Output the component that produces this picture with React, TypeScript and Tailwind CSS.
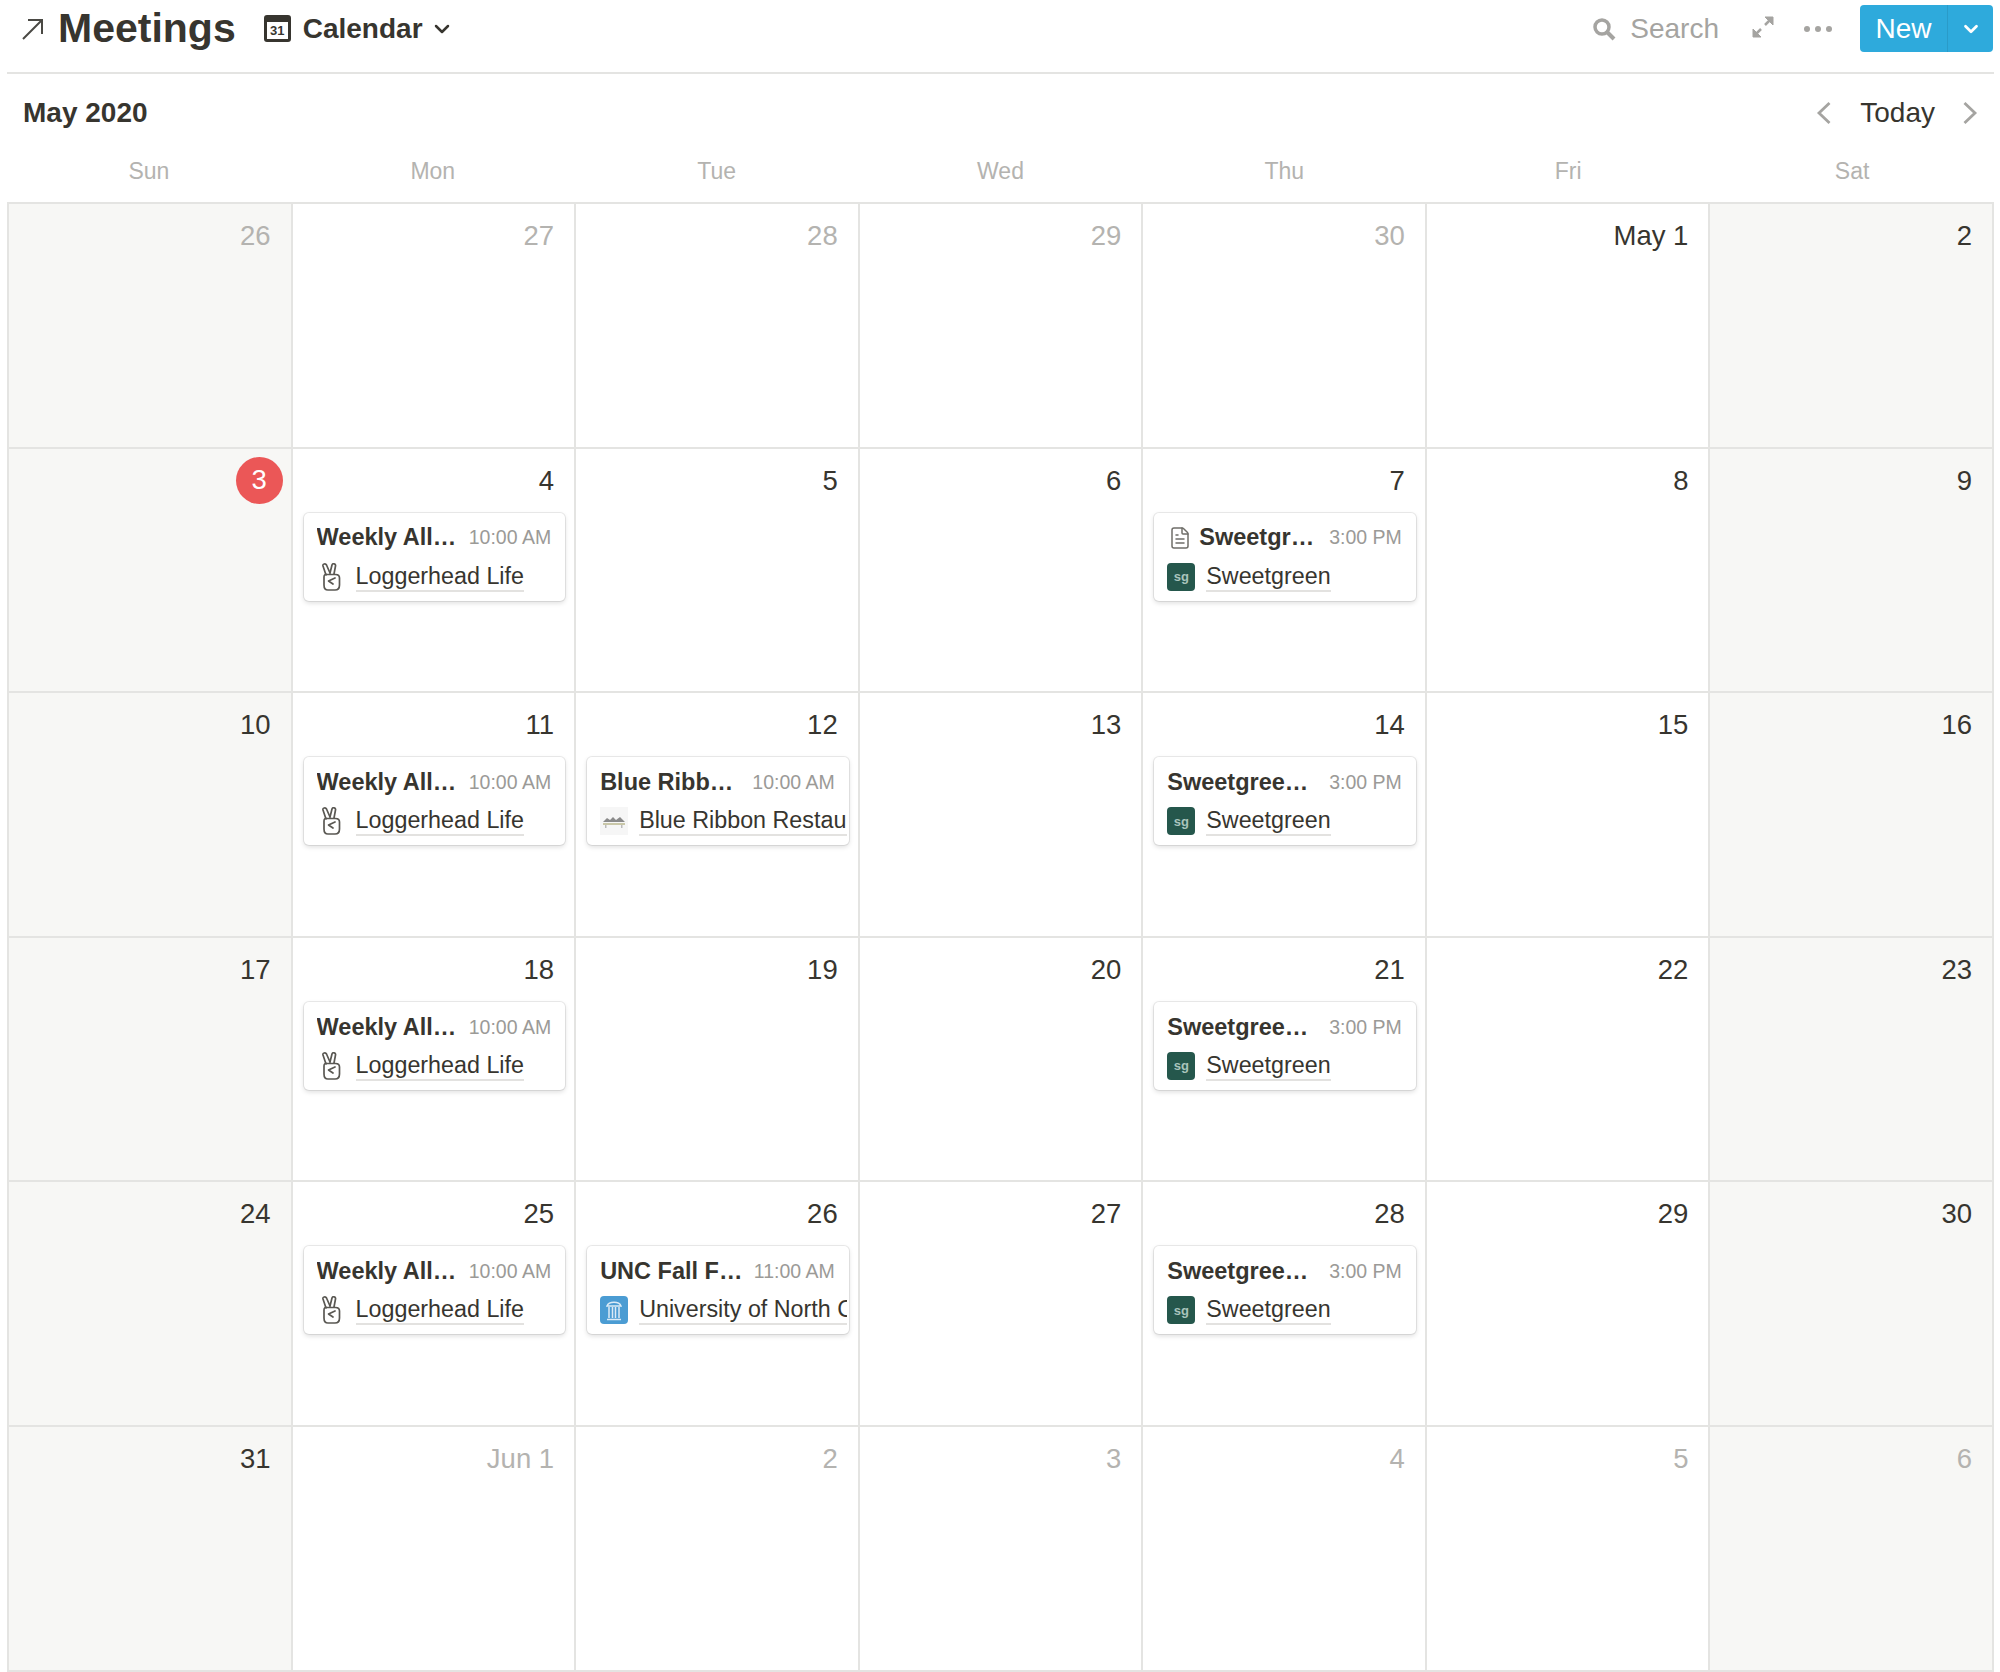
import React from 'react';
import { ChevronDown, FileText } from 'lucide-react';

type Source = 'peace' | 'sg' | 'ribbon' | 'unc';

type Meeting = {
  title: string;
  time: string;
  source: string;
  icon: Source;
  doc?: boolean;
};

type Day = {
  label: string;
  muted?: boolean;
  today?: boolean;
  meeting?: Meeting;
};

const allHands: Meeting = { title: 'Weekly All Hands', time: '10:00 AM', source: 'Loggerhead Life', icon: 'peace' };
const sweetgreen: Meeting = { title: 'Sweetgreen Meeting', time: '3:00 PM', source: 'Sweetgreen', icon: 'sg' };

const days: Day[] = [
  { label: '26', muted: true },
  { label: '27', muted: true },
  { label: '28', muted: true },
  { label: '29', muted: true },
  { label: '30', muted: true },
  { label: 'May 1' },
  { label: '2' },
  { label: '3', today: true },
  { label: '4', meeting: allHands },
  { label: '5' },
  { label: '6' },
  { label: '7', meeting: { ...sweetgreen, doc: true } },
  { label: '8' },
  { label: '9' },
  { label: '10' },
  { label: '11', meeting: allHands },
  {
    label: '12',
    meeting: { title: 'Blue Ribbon Meeting', time: '10:00 AM', source: 'Blue Ribbon Restaurants', icon: 'ribbon' },
  },
  { label: '13' },
  { label: '14', meeting: sweetgreen },
  { label: '15' },
  { label: '16' },
  { label: '17' },
  { label: '18', meeting: allHands },
  { label: '19' },
  { label: '20' },
  { label: '21', meeting: sweetgreen },
  { label: '22' },
  { label: '23' },
  { label: '24' },
  { label: '25', meeting: allHands },
  {
    label: '26',
    meeting: { title: 'UNC Fall Fair Meeting', time: '11:00 AM', source: 'University of North Carolina', icon: 'unc' },
  },
  { label: '27' },
  { label: '28', meeting: sweetgreen },
  { label: '29' },
  { label: '30' },
  { label: '31' },
  { label: 'Jun 1', muted: true },
  { label: '2', muted: true },
  { label: '3', muted: true },
  { label: '4', muted: true },
  { label: '5', muted: true },
  { label: '6', muted: true },
];

const weekdays = ['Sun', 'Mon', 'Tue', 'Wed', 'Thu', 'Fri', 'Sat'];

function SourceIcon({ icon }: { icon: Source }) {
  if (icon === 'peace') {
    return (
      <div className="flex h-[28px] w-[28px] shrink-0 items-center justify-center">
        <svg width="20" height="28" viewBox="0 0 20 28" fill="none" stroke="#5a5853" strokeWidth="1.7" strokeLinejoin="round" strokeLinecap="round">
          <path d="M5 12 L2 3 C1.5 1 4.5 0 5.5 2 L9 10" />
          <path d="M9 10 L11 2 C11.5 0 15 0.5 14.5 3 L13 11" />
          <path d="M3 14 C3 11.5 4.5 11 6 11.5 L14.5 11.5 C17.5 11.5 18.5 13 18.5 15 L18.5 22 C18.5 25.5 16.5 27 14 27 L7 27 C4.5 27 3 25.5 3 22 Z" />
          <path d="M14 15 L7.5 18 L12 21" />
        </svg>
      </div>
    );
  }
  if (icon === 'sg') {
    return (
      <div className="flex h-[28px] w-[28px] shrink-0 items-center justify-center rounded-[4px] bg-[#25574c] text-[13px] font-bold leading-none text-[#a9c4bc]">
        sg
      </div>
    );
  }
  if (icon === 'ribbon') {
    return (
      <div className="flex h-[28px] w-[28px] shrink-0 items-center justify-center bg-[#f6f6f6]">
        <svg width="24" height="14" viewBox="0 0 24 14">
          <path d="M1 8 L5 4 L8 6 L11 3 L14 6 L18 3 L23 8 Z" fill="#8a8a8a" />
          <rect x="1" y="9" width="22" height="2" fill="#c9c7a8" />
          <rect x="3" y="11" width="1.5" height="3" fill="#bbb" />
          <rect x="19" y="11" width="1.5" height="3" fill="#bbb" />
        </svg>
      </div>
    );
  }
  return (
    <div className="flex h-[28px] w-[28px] shrink-0 items-center justify-center rounded-[4px] bg-[#4b9cd3]">
      <svg width="18" height="22" viewBox="0 0 18 22" fill="none" stroke="#dcebf6" strokeWidth="1.5">
        <path d="M2 7 C4 2 14 2 16 7 Z" />
        <path d="M4 8 V19 M7.5 8 V19 M10.5 8 V19 M14 8 V19" />
        <path d="M2 20.5 H16" />
      </svg>
    </div>
  );
}

function MeetingCard({ meeting }: { meeting: Meeting }) {
  return (
    <div className="ml-[11px] mr-[9px] h-[88px] overflow-hidden rounded-[5px] bg-white pl-[13px] shadow-[0_0_0_1px_rgba(15,15,15,0.08),0_2px_5px_rgba(15,15,15,0.14)]">
      <div className="flex h-[49px] items-center pr-[14px] pt-[2px]">
        {meeting.doc && (
          <FileText className="ml-[1px] mr-[7px] h-[24px] w-[24px] shrink-0 text-[#6f6e69]" strokeWidth={1.5} />
        )}
        <span className="min-w-0 flex-1 truncate text-[23.5px] font-bold text-[#37352f]">{meeting.title}</span>
        <span className="ml-[10px] shrink-0 text-[19.5px] text-[#9b9a97]">{meeting.time}</span>
      </div>
      <div className="mr-[2px] flex items-center gap-[11px] overflow-hidden whitespace-nowrap">
        <SourceIcon icon={meeting.icon} />
        <span className="border-b-2 border-[#e3e2e0] text-[23.3px] leading-[28px] text-[#37352f]">{meeting.source}</span>
      </div>
    </div>
  );
}

function DayCell({ day, weekend }: { day: Day; weekend: boolean }) {
  return (
    <div className={`border-b-2 border-r-2 border-[#e4e4e2] ${weekend ? 'bg-[#f7f7f5]' : 'bg-white'}`}>
      {day.today ? (
        <div className="flex h-[55px] items-start justify-end pr-[8px] pt-[8px]">
          <div className="flex h-[47px] w-[47px] items-center justify-center rounded-full bg-[#eb5757] text-[27.5px] text-white">
            {day.label}
          </div>
        </div>
      ) : (
        <div
          className={`flex h-[55px] items-start justify-end pr-[20px] pt-[15px] text-[27.5px] leading-[34px] ${
            day.muted ? 'text-[#b4b3b0]' : 'text-[#37352f]'
          }`}
        >
          {day.label}
        </div>
      )}
      {day.meeting && (
        <div className="pt-[9px]">
          <MeetingCard meeting={day.meeting} />
        </div>
      )}
    </div>
  );
}

export default function App() {
  return (
    <div className="h-[1672px] w-[2000px] overflow-hidden bg-white font-['Liberation_Sans',sans-serif] text-[#37352f]">
      <div className="pl-[7px] pr-[6px]">
        {/* top bar */}
        <div className="flex h-[74px] items-start border-b-2 border-[#e4e4e2] pt-[5px]">
          <div className="flex h-[47px] items-center pl-[14px]">
            <svg width="24" height="24" viewBox="0 0 24 24" fill="none" stroke="#4a4944" strokeWidth="2">
              <path d="M2 22 L21 3 M7 3 H21 V17" />
            </svg>
            <span className="ml-[13px] text-[41px] font-bold">Meetings</span>
            <div className="relative ml-[28px] flex h-[27px] w-[27px] items-end justify-center rounded-[3px] border-[3px] border-t-[7px] border-[#37352f]">
              <span className="text-[13px] font-bold leading-[16px]">31</span>
            </div>
            <span className="ml-[12px] text-[28px] font-bold">Calendar</span>
            <ChevronDown className="ml-[7px] h-[24px] w-[24px]" strokeWidth={2.5} />
          </div>
          <div className="ml-auto mr-[1px] flex h-[47px] items-center text-[#a5a4a1]">
            <svg width="24" height="24" viewBox="0 0 24 24" fill="none" stroke="#a5a4a1">
              <circle cx="10" cy="10" r="7" strokeWidth="3.5" />
              <path d="M15 15 L22 22" strokeWidth="4" />
            </svg>
            <span className="ml-[14px] text-[28px]">Search</span>
            <svg className="mb-[4px] ml-[32px]" width="24" height="24" viewBox="0 0 24 24" fill="#a5a4a1" stroke="#a5a4a1" strokeWidth="2.5">
              <path d="M14 10 L21 3" />
              <path d="M14 2 H22 V10 Z" strokeWidth="1" />
              <path d="M10 14 L3 21" />
              <path d="M2 14 V22 H10 Z" strokeWidth="1" />
            </svg>
            <div className="ml-[29px] flex gap-[5px]">
              <div className="h-[6px] w-[6px] rounded-full bg-[#a5a4a1]"></div>
              <div className="h-[6px] w-[6px] rounded-full bg-[#a5a4a1]"></div>
              <div className="h-[6px] w-[6px] rounded-full bg-[#a5a4a1]"></div>
            </div>
            <div className="ml-[28px] flex h-[47px] w-[133px] items-center rounded-[4px] bg-[#2eaadc] text-white">
              <div className="flex h-full w-[88px] items-center justify-center border-r border-[#2a9bc9] text-[28px]">
                New
              </div>
              <div className="flex flex-1 items-center justify-center">
                <ChevronDown className="h-[22px] w-[22px]" strokeWidth={3} />
              </div>
            </div>
          </div>
        </div>

        {/* month row */}
        <div className="flex h-[78px] items-center pl-[16px]">
          <span className="text-[28px] font-bold">May 2020</span>
          <div className="ml-auto flex items-center pr-[16px]">
            <svg width="15" height="24" viewBox="0 0 15 24" fill="none" stroke="#a5a4a1" strokeWidth="2.8">
              <path d="M13.5 2 L3 12 L13.5 22" />
            </svg>
            <span className="ml-[29px] text-[28px]">Today</span>
            <svg className="ml-[28px]" width="15" height="24" viewBox="0 0 15 24" fill="none" stroke="#a5a4a1" strokeWidth="2.8">
              <path d="M1.5 2 L12 12 L1.5 22" />
            </svg>
          </div>
        </div>

        {/* weekday names */}
        <div className="grid h-[50px] grid-cols-7 pb-[11px] text-center text-[23px] text-[#b4b3b0]">
          {weekdays.map((name) => (
            <div key={name} className="flex items-center justify-center">
              {name}
            </div>
          ))}
        </div>

        {/* calendar grid */}
        <div className="grid auto-rows-[244.6px] grid-cols-7 border-l-2 border-t-2 border-[#e4e4e2]">
          {days.map((day, index) => (
            <DayCell key={index} day={day} weekend={index % 7 === 0 || index % 7 === 6} />
          ))}
        </div>
      </div>
    </div>
  );
}
